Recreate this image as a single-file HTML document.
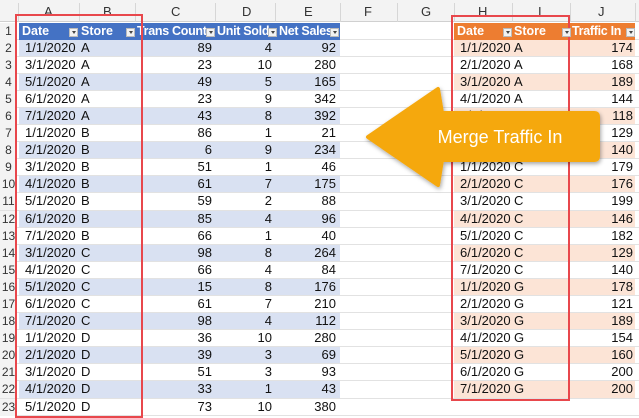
<!DOCTYPE html>
<html><head><meta charset="utf-8"><style>
*{margin:0;padding:0;box-sizing:border-box}
body{width:639px;height:418px;overflow:hidden;background:#fff;font-family:"Liberation Sans",Arial,sans-serif;font-size:13px;color:#111;position:relative}
.ch{position:absolute;top:0;left:0;width:639px;height:22px;background:#f3f3f3;border-bottom:1px solid #d0d0d0}
.ch span{position:absolute;top:4px;font-size:13px;color:#333;text-align:center}
.vl{position:absolute;top:3px;height:19px;width:1px;background:#d6d6d6}
.rows{position:absolute;top:22.5px;left:0;width:639px}
.r{position:relative;height:17.1px;border-bottom:1px solid #e2e2e2;line-height:16px}
.r.o{background-image:linear-gradient(to right,transparent 19px,#D9E1F2 19px,#D9E1F2 340px,transparent 340px,transparent 454px,#FCE4D6 454px,#FCE4D6 635px,transparent 635px)}
.r span{position:absolute;top:0;white-space:nowrap}
.n{left:0;width:17px;text-align:center;background:#f3f3f3;color:#333;font-size:12px;height:17px}
.a{left:25px}.b{left:81px}
.c{right:427px}.d{right:367px}.e{right:303px}
.h{left:460px}.i{left:514px}.j{right:6px}
.hd{background:#fff}
.hd .bl{position:absolute;left:19px;width:321px;height:17px;background:#4472C4}
.hd .or{position:absolute;left:454px;width:181px;height:17px;background:#ED7D31}
.hd span.t{color:#fff;font-weight:bold;font-size:12.5px}
.dd{position:absolute;top:5px;width:9px;height:9px;background:#f2f2f2;border:1px solid #bbb;z-index:2}
.dd:after{content:"";position:absolute;left:1.5px;top:2.5px;border-left:2.5px solid transparent;border-right:2.5px solid transparent;border-top:3px solid #444}
.red{position:absolute;border:2px solid #E8474C}
</style></head><body>
<div class="ch">
<span style="left:44px">A</span><span style="left:103px">B</span><span style="left:171px">C</span><span style="left:242px">D</span><span style="left:304px">E</span><span style="left:364px">F</span><span style="left:421px">G</span><span style="left:478px">H</span><span style="left:538px">I</span><span style="left:598px">J</span>
<div class="vl" style="left:18px"></div><div class="vl" style="left:79px"></div><div class="vl" style="left:135px"></div><div class="vl" style="left:215px"></div><div class="vl" style="left:275px"></div><div class="vl" style="left:340px"></div><div class="vl" style="left:397px"></div><div class="vl" style="left:454px"></div><div class="vl" style="left:512px"></div><div class="vl" style="left:570px"></div><div class="vl" style="left:635px"></div>
</div>
<div class="rows">
<div class="r hd"><div class="bl"></div><div class="or"></div><span class="n">1</span>
<span class="t" style="left:22px">Date</span><i class="dd" style="left:69px"></i>
<span class="t" style="left:81px">Store</span><i class="dd" style="left:126px"></i>
<span class="t" style="left:137px;letter-spacing:-0.3px">Trans Count</span><i class="dd" style="left:206px"></i>
<span class="t" style="left:217px;letter-spacing:-0.3px">Unit Sold</span><i class="dd" style="left:268px"></i>
<span class="t" style="left:279px;letter-spacing:-0.3px">Net Sales</span><i class="dd" style="left:330px"></i>
<span class="t" style="left:457px">Date</span><i class="dd" style="left:503px"></i>
<span class="t" style="left:514px">Store</span><i class="dd" style="left:562px"></i>
<span class="t" style="left:572px;letter-spacing:-0.3px">Traffic In</span><i class="dd" style="left:626px"></i>
</div>
<div class="r o"><span class="n">2</span><span class="a">1/1/2020</span><span class="b">A</span><span class="c">89</span><span class="d">4</span><span class="e">92</span><span class="h">1/1/2020</span><span class="i">A</span><span class="j">174</span></div>
<div class="r"><span class="n">3</span><span class="a">3/1/2020</span><span class="b">A</span><span class="c">23</span><span class="d">10</span><span class="e">280</span><span class="h">2/1/2020</span><span class="i">A</span><span class="j">168</span></div>
<div class="r o"><span class="n">4</span><span class="a">5/1/2020</span><span class="b">A</span><span class="c">49</span><span class="d">5</span><span class="e">165</span><span class="h">3/1/2020</span><span class="i">A</span><span class="j">189</span></div>
<div class="r"><span class="n">5</span><span class="a">6/1/2020</span><span class="b">A</span><span class="c">23</span><span class="d">9</span><span class="e">342</span><span class="h">4/1/2020</span><span class="i">A</span><span class="j">144</span></div>
<div class="r o"><span class="n">6</span><span class="a">7/1/2020</span><span class="b">A</span><span class="c">43</span><span class="d">8</span><span class="e">392</span><span class="h">5/1/2020</span><span class="i">B</span><span class="j">118</span></div>
<div class="r"><span class="n">7</span><span class="a">1/1/2020</span><span class="b">B</span><span class="c">86</span><span class="d">1</span><span class="e">21</span><span class="h">6/1/2020</span><span class="i">B</span><span class="j">129</span></div>
<div class="r o"><span class="n">8</span><span class="a">2/1/2020</span><span class="b">B</span><span class="c">6</span><span class="d">9</span><span class="e">234</span><span class="h">7/1/2020</span><span class="i">B</span><span class="j">140</span></div>
<div class="r"><span class="n">9</span><span class="a">3/1/2020</span><span class="b">B</span><span class="c">51</span><span class="d">1</span><span class="e">46</span><span class="h">1/1/2020</span><span class="i">C</span><span class="j">179</span></div>
<div class="r o"><span class="n">10</span><span class="a">4/1/2020</span><span class="b">B</span><span class="c">61</span><span class="d">7</span><span class="e">175</span><span class="h">2/1/2020</span><span class="i">C</span><span class="j">176</span></div>
<div class="r"><span class="n">11</span><span class="a">5/1/2020</span><span class="b">B</span><span class="c">59</span><span class="d">2</span><span class="e">88</span><span class="h">3/1/2020</span><span class="i">C</span><span class="j">199</span></div>
<div class="r o"><span class="n">12</span><span class="a">6/1/2020</span><span class="b">B</span><span class="c">85</span><span class="d">4</span><span class="e">96</span><span class="h">4/1/2020</span><span class="i">C</span><span class="j">146</span></div>
<div class="r"><span class="n">13</span><span class="a">7/1/2020</span><span class="b">B</span><span class="c">66</span><span class="d">1</span><span class="e">40</span><span class="h">5/1/2020</span><span class="i">C</span><span class="j">182</span></div>
<div class="r o"><span class="n">14</span><span class="a">3/1/2020</span><span class="b">C</span><span class="c">98</span><span class="d">8</span><span class="e">264</span><span class="h">6/1/2020</span><span class="i">C</span><span class="j">129</span></div>
<div class="r"><span class="n">15</span><span class="a">4/1/2020</span><span class="b">C</span><span class="c">66</span><span class="d">4</span><span class="e">84</span><span class="h">7/1/2020</span><span class="i">C</span><span class="j">140</span></div>
<div class="r o"><span class="n">16</span><span class="a">5/1/2020</span><span class="b">C</span><span class="c">15</span><span class="d">8</span><span class="e">176</span><span class="h">1/1/2020</span><span class="i">G</span><span class="j">178</span></div>
<div class="r"><span class="n">17</span><span class="a">6/1/2020</span><span class="b">C</span><span class="c">61</span><span class="d">7</span><span class="e">210</span><span class="h">2/1/2020</span><span class="i">G</span><span class="j">121</span></div>
<div class="r o"><span class="n">18</span><span class="a">7/1/2020</span><span class="b">C</span><span class="c">98</span><span class="d">4</span><span class="e">112</span><span class="h">3/1/2020</span><span class="i">G</span><span class="j">189</span></div>
<div class="r"><span class="n">19</span><span class="a">1/1/2020</span><span class="b">D</span><span class="c">36</span><span class="d">10</span><span class="e">280</span><span class="h">4/1/2020</span><span class="i">G</span><span class="j">154</span></div>
<div class="r o"><span class="n">20</span><span class="a">2/1/2020</span><span class="b">D</span><span class="c">39</span><span class="d">3</span><span class="e">69</span><span class="h">5/1/2020</span><span class="i">G</span><span class="j">160</span></div>
<div class="r"><span class="n">21</span><span class="a">3/1/2020</span><span class="b">D</span><span class="c">51</span><span class="d">3</span><span class="e">93</span><span class="h">6/1/2020</span><span class="i">G</span><span class="j">200</span></div>
<div class="r o"><span class="n">22</span><span class="a">4/1/2020</span><span class="b">D</span><span class="c">33</span><span class="d">1</span><span class="e">43</span><span class="h">7/1/2020</span><span class="i">G</span><span class="j">200</span></div>
<div class="r"><span class="n">23</span><span class="a">5/1/2020</span><span class="b">D</span><span class="c">73</span><span class="d">10</span><span class="e">380</span></div>
</div>
<div class="red" style="left:15px;top:14px;width:128px;height:404px"></div>
<div class="red" style="left:451px;top:15px;width:119px;height:386px"></div>
<svg style="position:absolute;left:0;top:0" width="639" height="418">
<defs><filter id="s" x="-10%" y="-10%" width="120%" height="130%"><feDropShadow dx="1" dy="2" stdDeviation="2" flood-opacity="0.35"/></filter></defs>
<path d="M368,137 L438,89 L442,113 L594,113 Q598,113 598,117 L598,156 Q598,160 594,160 L442,160 L438,185 Z" fill="#F5A80E" stroke="#F5A80E" stroke-width="4" stroke-linejoin="round" filter="url(#s)"/>
<text x="500" y="143" fill="#fff" font-family="Liberation Sans, sans-serif" font-size="18" text-anchor="middle">Merge Traffic In</text>
</svg>
</body></html>
